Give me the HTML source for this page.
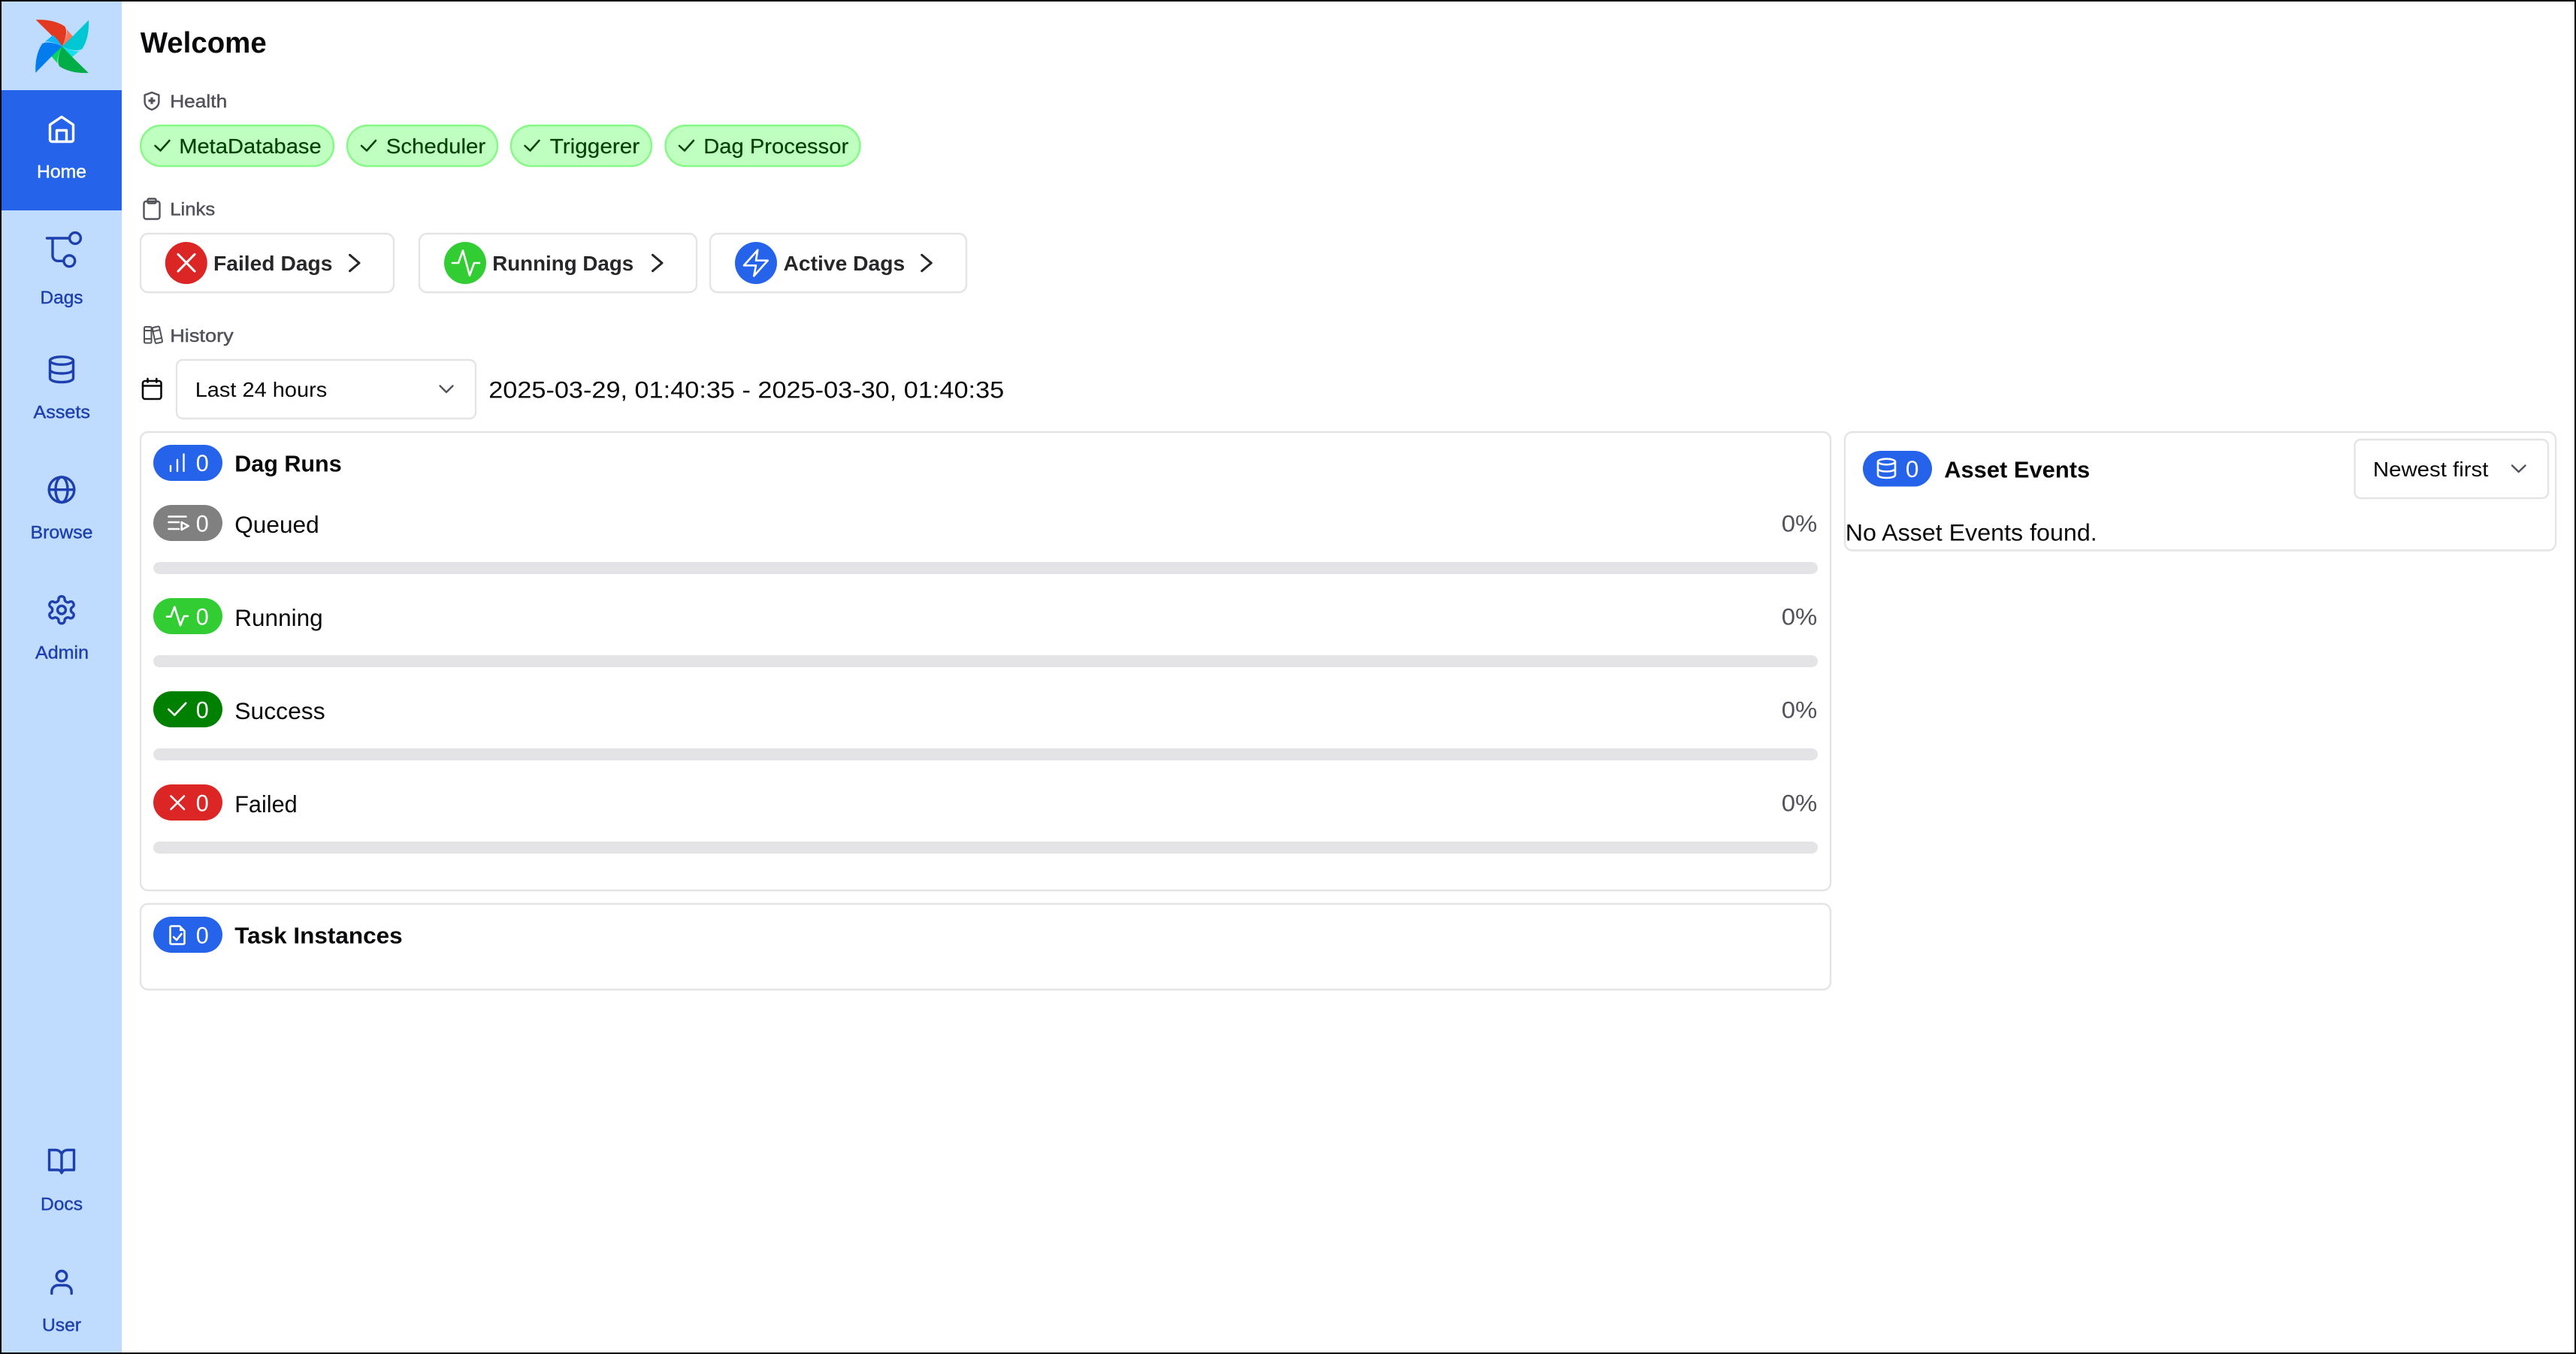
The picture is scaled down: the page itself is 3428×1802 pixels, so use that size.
<!DOCTYPE html>
<html lang="en">
<head>
<meta charset="utf-8">
<title>Airflow - Welcome</title>
<style>
html,body{margin:0;padding:0;background:#fff;width:3428px;height:1802px;overflow:hidden}
svg{display:block}
text{font-family:"Liberation Sans",Arial,sans-serif;transform:translateX(-.8px)}
.nav{font-size:24px;fill:#1e40af;stroke:#1e40af;stroke-width:.4}
.head{font-size:24.5px;fill:#52525b;stroke:#52525b;stroke-width:.45}
.pill{font-size:27.5px;fill:#004000;stroke:#004000;stroke-width:.2}
.btn{font-size:27.5px;font-weight:700;fill:#27272a}
.t{font-size:31.5px;fill:#09090b}
.b{font-size:31px;font-weight:700;fill:#09090b}
.s{font-size:28px;fill:#09090b}
.z{font-size:31.5px;fill:#fff}
.p{font-size:31.5px;fill:#52525b}
.card{fill:#fff;stroke:#e4e4e7;stroke-width:2.4}
.ic{fill:none;stroke-linecap:round;stroke-linejoin:round}
.w{fill:none;stroke:#fff;stroke-width:2.6;stroke-linecap:round;stroke-linejoin:round}
.sb{fill:none;stroke:#1e40af;stroke-width:3.4;stroke-linecap:round;stroke-linejoin:round}
.g{fill:none;stroke:#52525b;stroke-width:2.4;stroke-linecap:round;stroke-linejoin:round}
.ck{fill:none;stroke:#004000;stroke-width:2.5;stroke-linecap:round;stroke-linejoin:round}
.track{fill:#e4e4e7}
</style>
</head>
<body>
<svg width="3428" height="1802" viewBox="0 0 3428 1802" xmlns="http://www.w3.org/2000/svg">
<rect width="3428" height="1802" fill="#fff"/>

<!-- Sidebar -->
<rect x="2" y="2" width="160" height="1798" fill="#bfdbfe"/>
<rect x="2" y="120" width="160" height="160" fill="#2563eb"/>

<!-- Logo -->
<defs>
<g id="bd"><path d="M0,0 L-43,-45 L-105,-106 C-60,-108 -20,-100 10,-80 C22,-65 15,-30 0,0Z"/></g>
<g id="bl"><path d="M0,0 C15,-30 24,-62 17,-70 L45,-37 C35,-25 15,-8 0,0Z"/></g>
</defs>
<g transform="translate(82.7,61.7) scale(.3333)">
<use href="#bd" fill="#e43921"/><use href="#bl" fill="#ff7557"/>
<g transform="rotate(90)"><use href="#bd" fill="#00c7d4"/><use href="#bl" fill="#11e1ee"/></g>
<g transform="rotate(180)"><use href="#bd" fill="#00ad46"/><use href="#bl" fill="#04d659"/></g>
<g transform="rotate(270)"><use href="#bd" fill="#017cee"/><use href="#bl" fill="#0cb6ff"/></g>
</g>

<!-- Home -->
<path class="ic" stroke="#fff" stroke-width="3.4" d="M82,155.5 L97.5,166 V186 a2.5,2.5 0 0 1 -2.5,2.5 H69 a2.5,2.5 0 0 1 -2.5,-2.5 V166 Z M75.5,188 V173.5 H88.5 V188"/>
<text class="nav" x="49.8" y="236.5" textLength="66" lengthAdjust="spacingAndGlyphs" style="fill:#fff;stroke:#fff">Home</text>

<!-- Dags -->
<circle class="sb" cx="100" cy="317" r="7.4"/>
<circle class="sb" cx="92.3" cy="347.3" r="7.4"/>
<path class="sb" d="M62.5,317 H92.5 M70,317 V340 a7,7 0 0 0 7,7.3 H84.5"/>
<text class="nav" x="54.3" y="404" textLength="57" lengthAdjust="spacingAndGlyphs">Dags</text>

<!-- Assets -->
<ellipse class="sb" cx="82" cy="480" rx="15.5" ry="5.2"/>
<path class="sb" d="M66.5,480 V503 C66.5,506.5 73,508.6 82,508.6 C91,508.6 97.5,506.5 97.5,503 V480 M66.5,491.5 C66.5,495 73,497 82,497 C91,497 97.5,495 97.5,491.5"/>
<text class="nav" x="45.3" y="556.5" textLength="75.5" lengthAdjust="spacingAndGlyphs">Assets</text>

<!-- Browse -->
<circle class="sb" cx="82" cy="651.7" r="16.8"/>
<ellipse class="sb" cx="82" cy="651.7" rx="8" ry="16.8"/>
<path class="sb" d="M65.5,651.7 H98.5"/>
<text class="nav" x="41.3" y="716.5" textLength="83" lengthAdjust="spacingAndGlyphs">Browse</text>

<!-- Admin -->
<g transform="translate(60.4,790.1) scale(1.8)" fill="none" stroke="#1e40af" stroke-width="1.9" stroke-linecap="round" stroke-linejoin="round">
<path d="M12.22 2h-.44a2 2 0 0 0-2 2v.18a2 2 0 0 1-1 1.73l-.43.25a2 2 0 0 1-2 0l-.15-.08a2 2 0 0 0-2.73.73l-.22.38a2 2 0 0 0 .73 2.73l.15.1a2 2 0 0 1 1 1.72v.51a2 2 0 0 1-1 1.74l-.15.09a2 2 0 0 0-.73 2.73l.22.38a2 2 0 0 0 2.73.73l.15-.08a2 2 0 0 1 2 0l.43.25a2 2 0 0 1 1 1.73V20a2 2 0 0 0 2 2h.44a2 2 0 0 0 2-2v-.18a2 2 0 0 1 1-1.73l.43-.25a2 2 0 0 1 2 0l.15.08a2 2 0 0 0 2.73-.73l.22-.39a2 2 0 0 0-.73-2.73l-.15-.08a2 2 0 0 1-1-1.74v-.5a2 2 0 0 1 1-1.74l.15-.09a2 2 0 0 0 .73-2.73l-.22-.38a2 2 0 0 0-2.73-.73l-.15.08a2 2 0 0 1-2 0l-.43-.25a2 2 0 0 1-1-1.73V4a2 2 0 0 0-2-2z"/>
<circle cx="12" cy="12" r="3"/>
</g>
<text class="nav" x="47.8" y="876.5" textLength="71" lengthAdjust="spacingAndGlyphs">Admin</text>

<!-- Docs -->
<path class="sb" d="M82,1536 C80.5,1532 77,1530.5 74,1530.5 H65.5 V1557 H77 C79.5,1557 81,1558.5 82,1561 C83,1558.5 84.5,1557 87,1557 H98.5 V1530.5 H90 C87,1530.5 83.5,1532 82,1536 Z M82,1536 V1560"/>
<text class="nav" x="54.8" y="1610.5" textLength="56" lengthAdjust="spacingAndGlyphs">Docs</text>

<!-- User -->
<circle class="sb" cx="82" cy="1698.3" r="6.8"/>
<path class="sb" d="M68.8,1721.5 V1719 a8.5,8.5 0 0 1 8.5,-8.5 H86.7 a8.5,8.5 0 0 1 8.5,8.5 V1721.5"/>
<text class="nav" x="56.8" y="1771.5" textLength="52" lengthAdjust="spacingAndGlyphs">User</text>

<!-- Welcome -->
<text x="187.5" y="70" font-size="39" font-weight="700" fill="#09090b" textLength="168" lengthAdjust="spacingAndGlyphs">Welcome</text>

<!-- Health -->
<path class="g" d="M202,123 L192.6,126.5 V135 C192.6,141 197,144.3 202,146 C207,144.3 211.4,141 211.4,135 V126.5 Z"/>
<path d="M202,129.5 V138.5 M197.5,134 H206.5" stroke="#52525b" stroke-width="3.2" fill="none"/>
<text class="head" x="227" y="143" textLength="76" lengthAdjust="spacingAndGlyphs">Health</text>

<g fill="#bfffbf" stroke="#85f985" stroke-width="2.4">
<rect x="187.2" y="167" width="256.8" height="54" rx="27"/>
<rect x="462" y="167" width="200" height="54" rx="27"/>
<rect x="680" y="167" width="187" height="54" rx="27"/>
<rect x="885.5" y="167" width="259" height="54" rx="27"/>
</g>
<path class="ck" d="M206.5,194 L213.5,200.5 L225.5,187"/>
<text class="pill" x="239" y="204" textLength="189.5" lengthAdjust="spacingAndGlyphs">MetaDatabase</text>
<path class="ck" d="M481,194 L488,200.5 L500,187"/>
<text class="pill" x="514.5" y="204" textLength="132.5" lengthAdjust="spacingAndGlyphs">Scheduler</text>
<path class="ck" d="M698.5,194 L705.5,200.5 L717.5,187"/>
<text class="pill" x="732.5" y="204" textLength="119.5" lengthAdjust="spacingAndGlyphs">Triggerer</text>
<path class="ck" d="M904,194 L911,200.5 L923,187"/>
<text class="pill" x="937" y="204" textLength="193" lengthAdjust="spacingAndGlyphs">Dag Processor</text>

<!-- Links -->
<rect class="g" x="191.5" y="268" width="21" height="23.5" rx="3"/>
<rect class="g" x="196.5" y="264.5" width="11" height="6" rx="1.5"/>
<text class="head" x="227" y="286.5" textLength="60" lengthAdjust="spacingAndGlyphs">Links</text>

<rect class="card" x="187" y="311" width="337" height="78" rx="10"/>
<circle cx="247.8" cy="350" r="28" fill="#dc2626"/>
<path d="M237,338.5 L259,361 M259,338.5 L237,361" stroke="#fff" stroke-width="3" stroke-linecap="round" fill="none"/>
<text class="btn" x="284.8" y="360" textLength="158.5" lengthAdjust="spacingAndGlyphs">Failed Dags</text>
<path class="ic" stroke="#27272a" stroke-width="3" d="M465.5,339.3 L478,350 L465.5,360.7"/>

<rect class="card" x="558" y="311" width="369" height="78" rx="10"/>
<circle cx="619" cy="350" r="28" fill="#32cd32"/>
<path class="w" stroke-width="2.8" d="M602,350 H610 L616,333.5 L625,366.5 L631,350 H638"/>
<text class="btn" x="656" y="360" textLength="188" lengthAdjust="spacingAndGlyphs">Running Dags</text>
<path class="ic" stroke="#27272a" stroke-width="3" d="M868.5,339.3 L881,350 L868.5,360.7"/>

<rect class="card" x="945" y="311" width="341" height="78" rx="10"/>
<circle cx="1006" cy="350" r="28" fill="#2563eb"/>
<path class="w" d="M1008.3,332.7 L990,353.3 H1006 L1003.3,367.3 L1021.7,346.7 H1006 Z"/>
<text class="btn" x="1043.3" y="360" textLength="161.7" lengthAdjust="spacingAndGlyphs">Active Dags</text>
<path class="ic" stroke="#27272a" stroke-width="3" d="M1226.7,339.3 L1239.3,350 L1226.7,360.7"/>

<!-- History -->
<rect x="192" y="435" width="9.5" height="21.5" rx="1.5" fill="none" stroke="#52525b" stroke-width="2"/>
<path d="M192,440 H201.5 M192,451 H201.5" fill="none" stroke="#52525b" stroke-width="2"/>
<g transform="rotate(-12 209 445)"><rect x="204.5" y="435" width="9.5" height="21.5" rx="1.5" fill="none" stroke="#52525b" stroke-width="2"/>
<path d="M204.5,440 H214 M204.5,451 H214" fill="none" stroke="#52525b" stroke-width="2"/></g>
<text class="head" x="227" y="455" textLength="84.5" lengthAdjust="spacingAndGlyphs">History</text>

<rect class="ic" stroke="#09090b" stroke-width="2.6" x="190" y="507" width="24.5" height="24" rx="3"/>
<path class="ic" stroke="#09090b" stroke-width="2.6" d="M190,513.5 H214.5 M196.5,504 V508.5 M208.3,504 V508.5"/>

<rect class="card" x="235" y="479" width="398" height="78" rx="8"/>
<text class="s" x="260.5" y="528" textLength="175.5" lengthAdjust="spacingAndGlyphs">Last 24 hours</text>
<path class="ic" stroke="#52525b" stroke-width="2.4" d="M585.5,513.5 L594,522 L602.5,513.5"/>
<text class="t" x="651" y="529.5" textLength="686" lengthAdjust="spacingAndGlyphs">2025-03-29, 01:40:35 - 2025-03-30, 01:40:35</text>

<!-- Dag Runs card -->
<rect class="card" x="187" y="575" width="2249" height="610" rx="10"/>
<rect x="204" y="592" width="92" height="48" rx="24" fill="#2563eb"/>
<path d="M227,620 V627 M236,612 V627 M244.5,604.5 V627" stroke="#fff" stroke-width="2.4" stroke-linecap="round" fill="none"/>
<text class="z" x="261.5" y="627" textLength="17" lengthAdjust="spacingAndGlyphs">0</text>
<text class="b" x="313" y="627.5" textLength="142.5" lengthAdjust="spacingAndGlyphs">Dag Runs</text>

<!-- Queued -->
<rect x="204" y="672" width="92" height="48" rx="24" fill="#808080"/>
<path class="w" stroke-width="2.2" d="M224.5,687.5 H247.5 M224.5,695 H238 M224.5,704 H238"/>
<path class="w" stroke-width="2.2" d="M241.7,695 L250.7,700 L241.7,705 Z"/>
<text class="z" x="261.5" y="707.5" textLength="17" lengthAdjust="spacingAndGlyphs">0</text>
<text class="t" x="313" y="709" textLength="112.5" lengthAdjust="spacingAndGlyphs">Queued</text>
<text class="p" x="2371.5" y="707.5" textLength="47.5" lengthAdjust="spacingAndGlyphs">0%</text>
<rect class="track" x="204" y="748" width="2215" height="16" rx="8"/>

<!-- Running -->
<rect x="204" y="796" width="92" height="48" rx="24" fill="#32cd32"/>
<path class="w" stroke-width="2.4" d="M222,820.7 H227.3 L232.3,807.7 L240,832.3 L245,820 H250"/>
<text class="z" x="261.5" y="831.5" textLength="17" lengthAdjust="spacingAndGlyphs">0</text>
<text class="t" x="313" y="833" textLength="117.5" lengthAdjust="spacingAndGlyphs">Running</text>
<text class="p" x="2371.5" y="831.5" textLength="47.5" lengthAdjust="spacingAndGlyphs">0%</text>
<rect class="track" x="204" y="872" width="2215" height="16" rx="8"/>

<!-- Success -->
<rect x="204" y="920" width="92" height="48" rx="24" fill="#008000"/>
<path class="w" d="M224.3,944 L232.3,951.7 L247.3,935.7"/>
<text class="z" x="261.5" y="955.5" textLength="17" lengthAdjust="spacingAndGlyphs">0</text>
<text class="t" x="313" y="957" textLength="120.5" lengthAdjust="spacingAndGlyphs">Success</text>
<text class="p" x="2371.5" y="955.5" textLength="47.5" lengthAdjust="spacingAndGlyphs">0%</text>
<rect class="track" x="204" y="996" width="2215" height="16" rx="8"/>

<!-- Failed -->
<rect x="204" y="1044" width="92" height="48" rx="24" fill="#dc2626"/>
<path class="w" d="M227.5,1059.5 L245,1077 M245,1059.5 L227.5,1077"/>
<text class="z" x="261.5" y="1079.5" textLength="17" lengthAdjust="spacingAndGlyphs">0</text>
<text class="t" x="313" y="1081" textLength="83.5" lengthAdjust="spacingAndGlyphs">Failed</text>
<text class="p" x="2371.5" y="1079.5" textLength="47.5" lengthAdjust="spacingAndGlyphs">0%</text>
<rect class="track" x="204" y="1120" width="2215" height="16" rx="8"/>

<!-- Task Instances card -->
<rect class="card" x="187" y="1203" width="2249" height="114" rx="10"/>
<rect x="204" y="1220" width="92" height="48" rx="24" fill="#2563eb"/>
<path class="w" stroke-width="2.2" d="M239,1232.5 H228 a1.5,1.5 0 0 0 -1.5,1.5 V1255 a1.5,1.5 0 0 0 1.5,1.5 H244 a1.5,1.5 0 0 0 1.5,-1.5 V1239 Z"/>
<path d="M239,1232.5 V1239 H245.5 Z" fill="#fff"/>
<path class="w" stroke-width="2.2" d="M231,1247 L235,1251 L241.5,1243"/>
<text class="z" x="261.5" y="1255.5" textLength="17" lengthAdjust="spacingAndGlyphs">0</text>
<text class="b" x="313" y="1255.5" textLength="223.5" lengthAdjust="spacingAndGlyphs">Task Instances</text>

<!-- Asset Events card -->
<rect class="card" x="2455" y="575" width="946" height="157.5" rx="10"/>
<rect x="2479" y="600" width="92" height="47.5" rx="23.7" fill="#2563eb"/>
<ellipse class="w" cx="2510.5" cy="614.5" rx="11.5" ry="3.8"/>
<path class="w" d="M2499,614.5 V632 C2499,634.5 2504,636 2510.5,636 C2517,636 2522,634.5 2522,632 V614.5 M2499,623.5 C2499,626 2504,627.5 2510.5,627.5 C2517,627.5 2522,626 2522,623.5"/>
<text class="z" x="2536.7" y="635" textLength="17.5" lengthAdjust="spacingAndGlyphs">0</text>
<text class="b" x="2588" y="635.7" textLength="194" lengthAdjust="spacingAndGlyphs">Asset Events</text>

<rect class="card" x="3133.5" y="585" width="257.5" height="78" rx="8"/>
<text class="s" x="3158.7" y="634" textLength="153.5" lengthAdjust="spacingAndGlyphs">Newest first</text>
<path class="ic" stroke="#52525b" stroke-width="2.4" d="M3343,619.5 L3351.7,628 L3360.5,619.5"/>
<text class="t" x="2456.5" y="719.3" textLength="335" lengthAdjust="spacingAndGlyphs">No Asset Events found.</text>

<!-- Screenshot frame -->
<rect x="0" y="0" width="3428" height="2" fill="#000"/>
<rect x="0" y="1800" width="3428" height="2" fill="#000"/>
<rect x="0" y="0" width="2" height="1802" fill="#000"/>
<rect x="3426" y="0" width="2" height="1802" fill="#000"/>
</svg>
</body>
</html>
